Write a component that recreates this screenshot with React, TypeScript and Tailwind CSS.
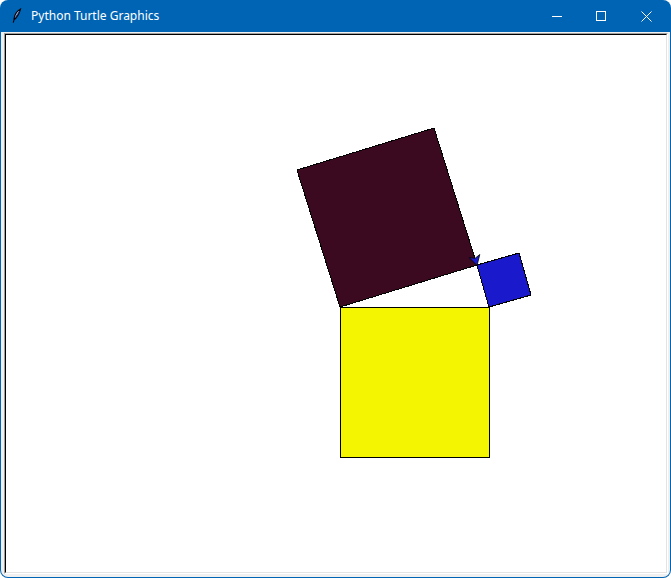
import React from "react";

// turtle canvas — shapes use page coords via viewBox offset
const YELLOW = "340.5,307.5 489.5,307.5 489.5,457.5 340.5,457.5";
const MAROON = "340,307 297,170 434,128 477,265";
const BLUE = "489,307 477,265 519,253 531,295";
const ARROW = "477,265.5 479.8,254.5 475.1,258.3 469.2,257.6";

function Feather() {
  return (
    <svg width="10" height="16" viewBox="0 0 10 16">
      <path
        d="M8.5 1 C5 3 2.5 7 2 11 L2.6 11.4 C5 9 7.5 5 8.5 1 Z"
        fill="#c9d8ee"
        stroke="#000"
        strokeWidth="1.1"
      />
      <path d="M2.3 11.2 L1.2 14.6" stroke="#000" strokeWidth="1.1" />
      <path d="M7.6 3 L3 10" stroke="#1a3c8c" strokeWidth="0.9" />
    </svg>
  );
}

function TitleButton({ kind }: { kind: "min" | "max" | "close" }) {
  return (
    <div className="flex h-full w-[45px] items-center justify-center">
      <svg width="11" height="11" viewBox="0 0 11 11" shapeRendering="crispEdges">
        {kind === "min" && <line x1="0.5" y1="5.5" x2="10.5" y2="5.5" stroke="#fff" />}
        {kind === "max" && <rect x="0.5" y="0.5" width="9" height="9" fill="none" stroke="#fff" />}
        {kind === "close" && (
          <g stroke="#fff" shapeRendering="geometricPrecision" strokeWidth="1">
            <line x1="0.5" y1="0.5" x2="10.5" y2="10.5" />
            <line x1="10.5" y1="0.5" x2="0.5" y2="10.5" />
          </g>
        )}
      </svg>
    </div>
  );
}

export default function App() {
  return (
    <div className="h-[578px] w-[671px] bg-white">
      <div className="flex h-full w-full flex-col overflow-hidden rounded-[8px] bg-[#0064b4] px-px pb-px">
        <div className="flex h-[32px] shrink-0 items-center">
          <div className="ml-[11px] mr-[9px] flex items-center">
            <Feather />
          </div>
          <span
            className="text-[12px] text-white"
            style={{ fontFamily: '"Noto Sans", "Open Sans", sans-serif' }}
          >
            Python Turtle Graphics
          </span>
          <div className="ml-auto mr-[1px] flex h-full">
            <TitleButton kind="min" />
            <TitleButton kind="max" />
            <TitleButton kind="close" />
          </div>
        </div>
        <div className="flex-1 rounded-b-[7px] bg-[#f0f0f0] pl-[3px] pr-[2px] pt-px pb-[3px]">
          <div className="h-full border border-b-white border-l-[#a0a0a0] border-r-white border-t-[#a0a0a0]">
            <div className="h-full border border-b-[#e3e3e3] border-l-black border-r-[#e3e3e3] border-t-black bg-white">
              <svg
                width="659"
                height="537"
                viewBox="6 35 659 537"
                className="block"
                shapeRendering="crispEdges"
              >
                <polygon points={YELLOW} fill="#f4f500" stroke="#000" strokeWidth="1" />
                <polygon points={MAROON} fill="#3c0a20" stroke="#000" strokeWidth="1" />
                <polygon points={BLUE} fill="#1a1acc" stroke="#000" strokeWidth="1" />
                <polygon
                  points={ARROW}
                  fill="#1a1acc"
                  stroke="#000"
                  strokeWidth="0.8"
                  shapeRendering="geometricPrecision"
                />
              </svg>
            </div>
          </div>
        </div>
      </div>
    </div>
  );
}
